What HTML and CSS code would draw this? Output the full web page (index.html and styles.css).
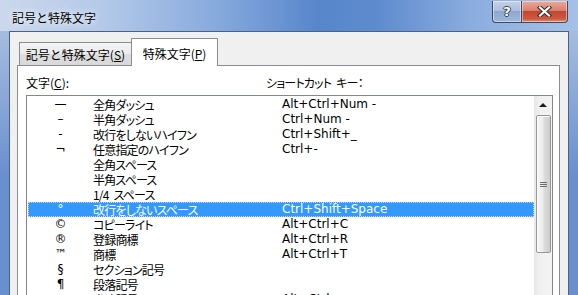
FILE: index.html
```html
<!DOCTYPE html>
<html lang="ja">
<head>
  <meta charset="UTF-8">
  <title>記号と特殊文字</title>
  <link rel="stylesheet" href="styles.css">
</head>
<body>
  <div class="window">
    <!-- Title bar -->
    <div class="titlebar">
      <span class="title">記号と特殊文字</span>
      <div class="caption-buttons">
        <span class="cbtn help">?</span>
        <span class="cbtn close">
          <svg width="15" height="11" viewBox="0 0 15 11">
            <path d="M3 1.5 L12 9.5 M12 1.5 L3 9.5" stroke="#3b2a2a" stroke-width="4.2" stroke-linecap="square"/>
            <path d="M3 1.5 L12 9.5 M12 1.5 L3 9.5" stroke="#fff" stroke-width="2.2" stroke-linecap="square"/>
          </svg>
        </span>
      </div>
    </div>

    <div class="client">
      <!-- Tabs -->
      <div class="tabs">
        <span class="tab">記号と特殊文字(<u>S</u>)</span>
        <span class="tab active">特殊文字(<u>P</u>)</span>
      </div>

      <div class="panel">
        <div class="labels">
          <span class="label-chars">文字(<u>C</u>):</span>
          <span class="label-keys">ショートカット キー：</span>
        </div>

        <div class="listbox">
          <div class="rows">
            <div class="row"><span class="sym">—</span><span class="name">全角ダッシュ</span><span class="key">Alt+Ctrl+Num -</span></div>
            <div class="row"><span class="sym">–</span><span class="name">半角ダッシュ</span><span class="key">Ctrl+Num -</span></div>
            <div class="row"><span class="sym">-</span><span class="name">改行をしないハイフン</span><span class="key">Ctrl+Shift+_</span></div>
            <div class="row"><span class="sym">¬</span><span class="name">任意指定のハイフン</span><span class="key">Ctrl+-</span></div>
            <div class="row"><span class="sym"></span><span class="name">全角スペース</span><span class="key"></span></div>
            <div class="row"><span class="sym"></span><span class="name">半角スペース</span><span class="key"></span></div>
            <div class="row"><span class="sym"></span><span class="name">1/4 スペース</span><span class="key"></span></div>
            <div class="row selected"><span class="sym">°</span><span class="name">改行をしないスペース</span><span class="key">Ctrl+Shift+Space</span></div>
            <div class="row"><span class="sym">©</span><span class="name">コピーライト</span><span class="key">Alt+Ctrl+C</span></div>
            <div class="row"><span class="sym">®</span><span class="name">登録商標</span><span class="key">Alt+Ctrl+R</span></div>
            <div class="row"><span class="sym">™</span><span class="name">商標</span><span class="key">Alt+Ctrl+T</span></div>
            <div class="row"><span class="sym">§</span><span class="name">セクション記号</span><span class="key"></span></div>
            <div class="row"><span class="sym">¶</span><span class="name">段落記号</span><span class="key"></span></div>
            <div class="row"><span class="sym">…</span><span class="name">省略記号</span><span class="key">Alt+Ctrl+.</span></div>
          </div>
          <div class="scrollbar">
            <div class="arrow"><span class="tri"></span></div>
            <div class="thumb"><span class="grip"></span></div>
          </div>
        </div>
      </div>
    </div>
  </div>
</body>
</html>
```

FILE: styles.css
```css
body {
  margin: 0;
  padding: 0;
  font-family: "Noto Sans CJK JP", "Noto Sans", sans-serif;
  font-size: 12px;
  color: #000;
}
.window {
  width: 578px;
  height: 295px;
  overflow: hidden;
  display: flex;
  flex-direction: column;
  background: linear-gradient(to bottom, #b3c6e3 0, #8eaad8 30%, #6a8fce 60%, #6a8fce 100%);
}
.titlebar {
  flex: none;
  height: 31px;
  display: flex;
  align-items: flex-start;
  background: linear-gradient(to right, #cbd8ec 0, #b3c9e8 18%, #86a9dc 38%, #5886cb 55%, #5d8bcd 65%, #8caddf 82%, #a6c1e6 100%);
}
.title {
  margin: 10px 0 0 12px;
  line-height: 16px;
  text-shadow: 0 0 6px rgba(255, 255, 255, 0.9), 0 0 10px rgba(255, 255, 255, 0.6);
}
.caption-buttons {
  margin: 1px 10px 0 auto;
  display: flex;
}
.cbtn {
  box-sizing: border-box;
  height: 22px;
  border: 1px solid #3a4a66;
  border-top: none;
  display: flex;
  align-items: center;
  justify-content: center;
  box-shadow: inset 0 0 0 1px rgba(255, 255, 255, 0.45);
}
.help {
  width: 30px;
  border-radius: 0 0 0 4px;
  background: linear-gradient(to bottom, #c3d1e7 0, #aebfdd 45%, #90a8cf 50%, #a0b7db 100%);
  color: #fff;
  font-family: "DejaVu Sans", sans-serif;
  font-weight: bold;
  font-size: 13px;
  line-height: 13px;
  text-shadow: 1px 0 0 #33415a, -1px 0 0 #33415a, 0 1px 0 #33415a, 0 -1px 0 #33415a;
}
.close {
  width: 47px;
  margin-left: -1px;
  border-radius: 0 0 4px 0;
  background: linear-gradient(to bottom, #e8aa9c 0, #d98170 45%, #c4462f 50%, #cc5a42 85%, #e29276 100%);
}
.close svg {
  display: block;
}
.client {
  flex: 1;
  margin: 0 9px;
  border: 1px solid #48628c;
  border-bottom: none;
  background: #f0f0f0;
  display: flex;
  flex-direction: column;
}
.tabs {
  flex: none;
  height: 33px;
  display: flex;
  align-items: flex-end;
  padding-left: 9px;
}
.tab {
  box-sizing: border-box;
  width: 113px;
  height: 23px;
  border: 1px solid #898c95;
  border-bottom: none;
  padding-top: 1px;
  line-height: 21px;
  text-align: center;
  background: linear-gradient(to bottom, #f4f4f4 0, #ebebeb 50%, #dddddd 51%, #d9d9d9 100%);
}
.tab.active {
  position: relative;
  z-index: 1;
  width: 87px;
  height: 28px;
  margin: 0 0 -1px -1px;
  padding-top: 5px;
  line-height: 20px;
  background: #fff;
}
.panel {
  flex: 1;
  margin: 0 8px 0 7px;
  border: 1px solid #898c95;
  background: #fff;
  display: flex;
  flex-direction: column;
}
.labels {
  display: flex;
  padding: 9px 0 0 8px;
  line-height: 16px;
}
.label-chars {
  width: 240px;
}
.label-keys {
  font-feature-settings: "palt";
  letter-spacing: -0.8px;
  word-spacing: 3px;
}
.listbox {
  margin: 4px 0 0 8px;
  width: 527px;
  box-sizing: border-box;
  border: 1px solid #828790;
  border-bottom: none;
  display: flex;
  flex: 1;
}
.rows {
  flex: 1;
  padding: 1px 0 0 1px;
}
.row {
  display: flex;
  height: 15px;
  line-height: 15px;
  white-space: nowrap;
  box-sizing: border-box;
}
.row.selected {
  background: #3399ff;
  color: #fff;
  outline: 1px dotted #b9dcff;
  outline-offset: -1px;
}
.sym {
  width: 65px;
  text-align: center;
  font-family: "DejaVu Sans", sans-serif;
  font-size: 12px;
}
.name {
  width: 189px;
  font-feature-settings: "palt";
  letter-spacing: -0.8px;
  word-spacing: 3px;
}
.key {
  font-family: "DejaVu Sans", sans-serif;
}
.scrollbar {
  width: 18px;
  flex: none;
  background: linear-gradient(to right, #e6e6e6 0, #f0f0f0 30%, #f4f4f4 100%);
  display: flex;
  flex-direction: column;
  align-items: center;
}
.arrow {
  height: 18px;
  display: flex;
  align-items: center;
  justify-content: center;
}
.tri {
  width: 0;
  height: 0;
  border-left: 4px solid transparent;
  border-right: 4px solid transparent;
  border-bottom: 4px solid #1e1e1e;
}
.thumb {
  box-sizing: border-box;
  width: 15px;
  height: 138px;
  margin-top: 1px;
  border: 1px solid #979797;
  border-radius: 2px;
  background: linear-gradient(to right, #f7f7f7 0, #ececec 45%, #dcdcdc 55%, #cdcdcd 100%);
  box-shadow: inset 1px 1px 0 #fff;
  display: flex;
  align-items: center;
  justify-content: center;
}
.grip {
  width: 7px;
  height: 5px;
  background: repeating-linear-gradient(to bottom, #6b6b6b 0, #6b6b6b 1px, transparent 1px, transparent 2px);
}
```
